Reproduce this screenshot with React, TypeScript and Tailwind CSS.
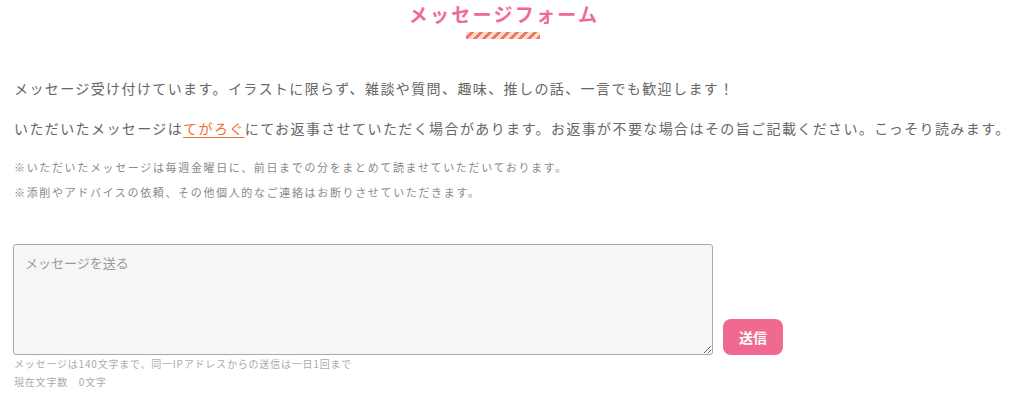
import React from 'react'

// Message form page: heading, notes, textarea and send button
const jp = "font-['Noto_Sans_CJK_JP','Noto_Sans',sans-serif]"

export default function App() {
    return (
        <div className={`${jp} w-[1024px] h-[404px] bg-white overflow-hidden`}>
            {/* Heading */}
            <div className="flex flex-col items-center pr-[18px]">
                <h1 className="text-[19px] leading-[28px] font-bold tracking-[0.12em] text-[#ef6b92] pl-[2px]">
                    メッセージフォーム
                </h1>
                <div className="mt-[4px] w-[74px] h-[7px] rounded-[1px] bg-[repeating-linear-gradient(-45deg,#f06b92_0_3.2px,#fde3a7_3.2px_6.4px)]" />
            </div>

            {/* Intro text */}
            <div className="px-[14px] mt-[39px] text-[14px] leading-[20px] tracking-[0.1em] text-[#666] whitespace-nowrap">
                <p>メッセージ受け付けています。イラストに限らず、雑談や質問、趣味、推しの話、一言でも歓迎します！</p>
                <p className="mt-[20px]">
                    いただいたメッセージは
                    <a href="#" className="text-[#f07034] underline underline-offset-[3px]">てがろぐ</a>
                    にてお返事させていただく場合があります。お返事が不要な場合はその旨ご記載ください。こっそり読みます。
                </p>
            </div>

            {/* Notes */}
            <div className="px-[14px] mt-[22px] text-[11px] leading-[15px] tracking-[0.15em] text-[#8a8a8a] whitespace-nowrap">
                <p>※いただいたメッセージは毎週金曜日に、前日までの分をまとめて読ませていただいております。</p>
                <p className="mt-[10px]">※添削やアドバイスの依頼、その他個人的なご連絡はお断りさせていただきます。</p>
            </div>

            {/* Form */}
            <div className="pl-[13px] mt-[44px]">
                <div className="flex items-end gap-[10px]">
                    <textarea
                        placeholder="メッセージを送る"
                        className="w-[700px] h-[111px] block bg-[#f6f6f6] border border-[#a9a9a9] rounded-[3px] px-[11px] py-[9px] text-[13px] leading-[18px] text-[#555] placeholder:text-[#999] outline-none resize"
                    />
                    <button className="w-[60px] h-[36px] rounded-[8px] bg-[#f06a8f] text-white text-[14px] font-bold">
                        送信
                    </button>
                </div>
                <div className="pl-[1px] text-[10px] leading-[18px] tracking-[0.8px] text-[#aaa]">
                    <p>メッセージは140文字まで、同一IPアドレスからの送信は一日1回まで</p>
                    <p>現在文字数　0文字</p>
                </div>
            </div>
        </div>
    )
}
